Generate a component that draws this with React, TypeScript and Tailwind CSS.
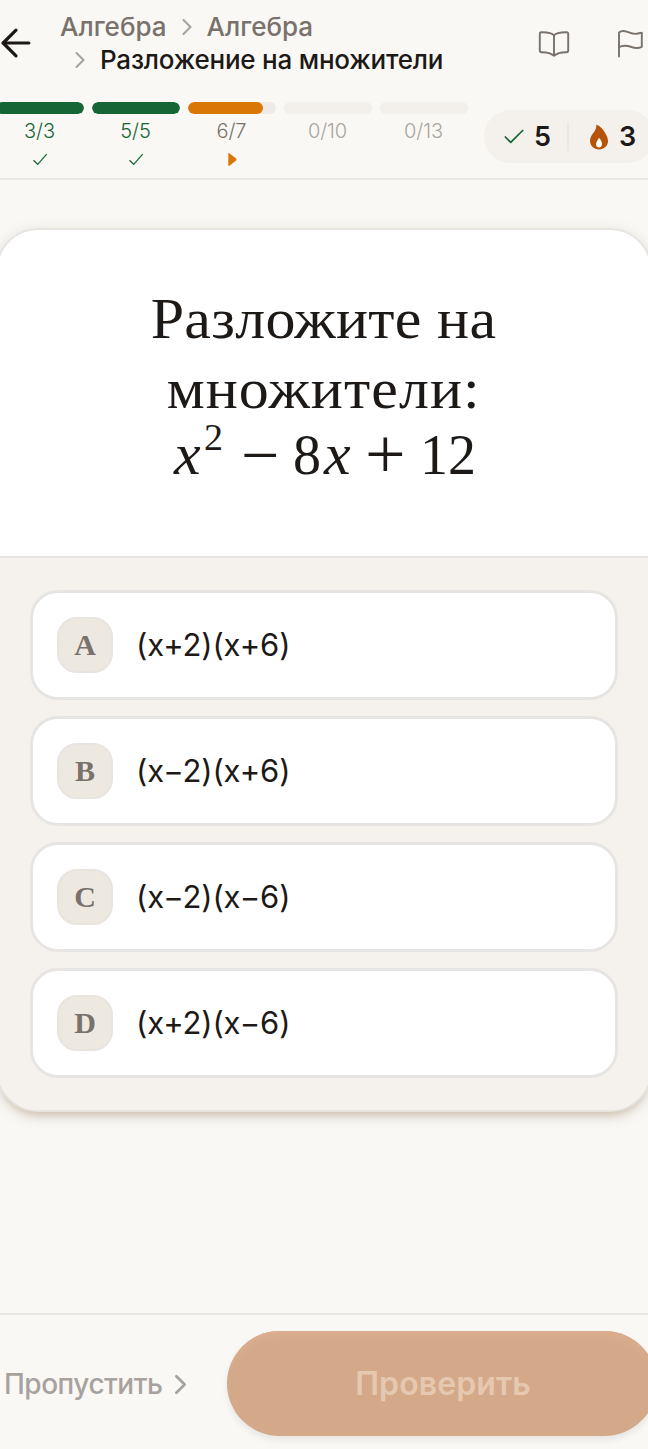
import React from 'react'
import { ArrowLeft, Check, ChevronRight } from 'lucide-react'

const steps = [
  { done: 3, total: 3 },
  { done: 5, total: 5 },
  { done: 6, total: 7 },
  { done: 0, total: 10 },
  { done: 0, total: 13 },
]

const answers = [
  { letter: 'A', text: '(x+2)(x+6)' },
  { letter: 'B', text: '(x−2)(x+6)' },
  { letter: 'C', text: '(x−2)(x−6)' },
  { letter: 'D', text: '(x+2)(x−6)' },
]

function BookIcon() {
  return (
    <svg className="h-[32px] w-[32px] shrink-0" viewBox="0 0 32 32" fill="none" stroke="#78716c" strokeWidth={1.9} strokeLinecap="round" strokeLinejoin="round">
      <path d="M16 7.500C14 5 9.500 4.200 3.500 4.300Q1.800 4.400 1.800 6V22.600Q1.800 24.200 3.400 24.200C9 24.100 13 25 16 27.800C19 25 23 24.100 28.600 24.200Q30.200 24.200 30.200 22.600V6Q30.200 4.400 28.500 4.300C22.500 4.200 18 5 16 7.500ZM16 7.500V27.800" />
    </svg>
  )
}

function FlagIcon() {
  return (
    <svg className="h-[32px] w-[28px] shrink-0" viewBox="0 0 28 32" fill="none" stroke="#78716c" strokeWidth={1.9} strokeLinecap="round" strokeLinejoin="round">
      <path d="M2 28.500V4.500C4 3 7 2.800 9.500 3.600C13 4.700 16 6.300 19.500 5.800C21.500 5.500 23 5 24.800 4.600V18.800C21 20.600 18 20.300 14.500 19C10.500 17.600 6 17 2 19.200" />
    </svg>
  )
}

function FlameIcon() {
  return (
    <svg className="h-[26px] w-[20px] shrink-0" viewBox="0 0 20 26">
      <path fill="#b45309" d="M7.400 .5C12 2.600 15 6.300 16.700 10C18.100 12.600 19 14.500 19 17C19 22 15 25.400 10 25.400C5 25.400 1 22 1 16.800C1 13.500 2.600 11.200 4.500 8.700C6.500 6.200 7.400 4 7.400 .5Z" />
      <path fill="#fffdf5" d="M10 13.800C11.800 16 13 17.600 13 20C13 22.200 11.800 23.400 10 23.400C8.200 23.400 7 22.200 7 20.200C7 17.800 8.900 16.500 10 13.800Z" />
    </svg>
  )
}

// one segment of the lesson progress, with its counter and state mark
function Step({ done, total }: { done: number; total: number }) {
  const complete = done === total
  const active = done > 0 && !complete
  return (
    <div className="flex w-[88px] shrink-0 flex-col items-center">
      <div className={`h-3 w-full overflow-hidden rounded-full ${active ? 'bg-[#eeebe6]' : 'bg-[#f3f0ec]'}`}>
        <div
          className={`h-full rounded-full ${complete ? 'bg-[#166534]' : 'bg-[#d97706]'}`}
          style={{ width: `${(done / total) * 100}%` }}
        />
      </div>
      <span
        className={`mt-[5px] -ml-[1px] text-[20px] leading-[24px] font-[350] tracking-[-0.1px] ${
          complete ? 'text-[#166534]' : active ? 'text-[#78716c]' : 'text-[#aaa59f]'
        }`}
      >
        {done}/{total}
      </span>
      {complete && (
        <svg className="mt-[8px] h-[16px] w-[16px]" viewBox="0 0 16 16" fill="none" stroke="#166534" strokeWidth={1.2}>
          <path d="M1.500 9.300L5.700 13.300L14.700 3.200" />
        </svg>
      )}
      {active && (
        <svg className="mt-[9px] h-[15px] w-[9px]" viewBox="0 0 9 15">
          <path fill="#d97706" d="M.3 2Q.3 .4 1.600 1.400L8 6.500Q9 7.500 8 8.500L1.600 13.800Q.3 14.600 .3 13Z" />
        </svg>
      )}
    </div>
  )
}

export default function App() {
  return (
    <div className="flex h-[1449px] w-full flex-col overflow-hidden bg-[#faf8f4] font-['Inter',sans-serif] text-[#1c1917]">
      <header className="h-[180px] shrink-0 border-b-2 border-[#eae8e4]">
        <div className="flex h-[102px] items-start">
          <ArrowLeft className="mt-[21px] -ml-[6px] h-[44px] w-[44px] shrink-0" strokeWidth={1.75} />
          <nav className="ml-[22px] w-[430px] pt-[10px] text-[26px] leading-[33px] font-medium text-[#78716c]">
            <div className="flex items-center">
              <span>Алгебра</span>
              <ChevronRight className="mx-[6px] h-[28px] w-[28px] text-[#a8a29e]" strokeWidth={1.8} />
              <span>Алгебра</span>
            </div>
            <div className="flex items-center">
              <ChevronRight className="mx-[6px] h-[28px] w-[28px] text-[#a8a29e]" strokeWidth={1.8} />
              <span className="whitespace-nowrap tracking-[-0.22px] text-[#1c1917]">Разложение на множители</span>
            </div>
          </nav>
          <div className="mt-[28px] ml-[48px]">
            <BookIcon />
          </div>
          <div className="mt-[28px] ml-[47px]">
            <FlagIcon />
          </div>
        </div>
        <div className="flex items-start">
          <div className="-ml-1 flex gap-2">
            {steps.map((s) => (
              <Step key={s.total} done={s.done} total={s.total} />
            ))}
          </div>
          <div className="mt-[8px] ml-4 flex h-[53px] w-[170px] shrink-0 items-center rounded-full bg-[#f4f1ed] text-[27px] font-semibold">
            <Check className="ml-[17px] h-[26px] w-[26px] text-[#166534]" strokeWidth={1.6} />
            <span className="ml-[7px] w-[17px] pt-[2px]">5</span>
            <span className="ml-[16px] h-[28px] w-[2px] bg-[#ebe8e3]" />
            <div className="ml-[20px]">
              <FlameIcon />
            </div>
            <span className="ml-[10px] pt-[2px]">3</span>
          </div>
        </div>
      </header>

      <main className="-mx-[4px] mt-[48px] flex h-[884px] shrink-0 flex-col overflow-hidden rounded-[42px] border-2 border-[#e7e5e0] bg-white shadow-[0_8px_6px_-4px_rgba(150,105,40,0.22),0_4px_16px_rgba(28,25,23,0.12)]">
        <h1 className="flex h-[326px] shrink-0 flex-col items-center pt-[54px] font-['Liberation_Serif',serif] text-[56px] leading-[70px]">
          <span className="scale-x-[1.07] tracking-[0.3px]">Разложите на</span>
          <span className="scale-x-[1.07] tracking-[1px]">множители:</span>
          <span className="-mt-[10px] flex h-[62px] items-baseline leading-[62px]">
            <i className="w-[32px] pl-[2px] text-[60px]">x</i>
            <span className="relative -top-[24px] w-[37px] text-[38px] leading-none">2</span>
            <span className="relative top-[4px] w-[52px] text-[68px] leading-none">−</span>
            <span className="w-[29px]">8</span>
            <i className="w-[43px] pl-[2px] text-[60px]">x</i>
            <span className="relative top-[4px] w-[55px] text-[72px] leading-none">+</span>
            <span>12</span>
          </span>
        </h1>
        <div className="flex flex-1 flex-col gap-[16px] border-t-2 border-[#e6e4e0] bg-[#f5f2ed] px-[32px] pt-[32px]">
          {answers.map((a) => (
            <button key={a.letter} className="flex h-[110px] shrink-0 items-center rounded-[28px] border-[3px] border-[#e7e5e3] bg-white pl-[24px] text-left">
              <span className="flex h-[56px] w-[56px] items-center justify-center rounded-[20px] border-2 border-[#e8e4df] bg-[#ede9e1] pb-[2px] font-['Liberation_Serif',serif] text-[30px] font-bold text-[#78716c]">
                {a.letter}
              </span>
              <span className="ml-[23px] text-[31px] tracking-[-0.15px]">{a.text}</span>
            </button>
          ))}
        </div>
      </main>

      <footer className="mt-auto flex h-[136px] shrink-0 items-start border-t-2 border-[#e9e7e2] pt-[16px]">
        <button className="ml-[4px] flex h-[106px] w-[223px] shrink-0 items-center text-[28px] font-medium text-[#a8a29e]">
          <span className="tracking-[-0.5px]">Пропустить</span>
          <ChevronRight className="ml-[2px] h-[33px] w-[33px]" strokeWidth={2} />
        </button>
        <button className="h-[105px] w-[430px] shrink-0 rounded-full bg-[#d3a98a] pl-[2px] text-[32px] font-semibold tracking-[0.1px] text-[#e6c8b1] shadow-[0_4px_6px_rgba(28,25,23,0.08),inset_0_10px_8px_-4px_#daae8e]">
          Проверить
        </button>
      </footer>
    </div>
  )
}
